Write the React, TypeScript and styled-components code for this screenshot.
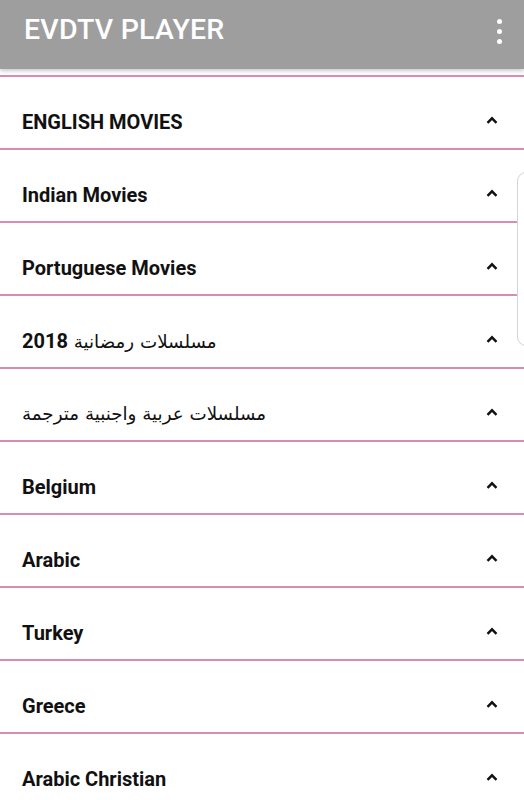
import React from "react";
import styled, { createGlobalStyle } from "styled-components";

const Global = createGlobalStyle`
  html, body { margin: 0; padding: 0; background: #fff; }
  body { font-family: Roboto, "DejaVu Sans", sans-serif; width: 524px; height: 800px; overflow: hidden; }
`;

const Page = styled.div`
  position: relative;
  width: 524px;
  height: 800px;
  overflow: hidden;
  background: #fff;
`;

const AppBar = styled.header`
  height: 69px;
  box-sizing: border-box;
  background: #9e9e9e;
  display: flex;
  align-items: center;
  justify-content: space-between;
  padding: 0 22px 8px 24px;
  box-shadow: 0 2px 4px rgba(0, 0, 0, 0.22);
  position: relative;
  z-index: 1;
`;

const Title = styled.h1`
  margin: 0;
  color: #fff;
  font-family: Roboto, sans-serif;
  font-weight: 500;
  font-size: 28.5px;
  letter-spacing: 0.2px;
  line-height: 1;
`;

const Dots = styled.div`
  display: flex;
  flex-direction: column;
  gap: 5px;
  padding-top: 2px;
`;

const Dot = styled.span`
  width: 5px;
  height: 5px;
  border-radius: 50%;
  background: #fff;
`;

const List = styled.ul`
  list-style: none;
  margin: 6px 0 0;
  padding: 0;
`;

const Row = styled.li`
  border-top: 2px solid #d98cb0;
  padding: 34px 26px 0 22px;
  box-sizing: content-box;
  display: flex;
  align-items: flex-start;
  justify-content: space-between;
  height: 37px;
`;

const Label = styled.span`
  font-family: Roboto, "DejaVu Sans", sans-serif;
  font-weight: 700;
  font-size: 20px;
  line-height: 22px;
  color: #111;
`;

const ArabicLabel = styled(Label)`
  font-family: "DejaVu Sans", sans-serif;
  font-weight: 400;
  font-size: 18.3px;
`;

const Num = styled.b`
  font-family: Roboto, sans-serif;
  font-weight: 700;
  font-size: 20px;
`;

const Chevron = styled.svg`
  width: 12px;
  height: 8px;
  margin-top: 5px;
`;

const SideTab = styled.div`
  position: absolute;
  left: 517px;
  top: 172px;
  width: 20px;
  height: 172px;
  border: 1px solid #d4d4d4;
  border-radius: 9px;
  background: #fff;
`;

const Up = () => (
  <Chevron viewBox="0 0 12 8">
    <polyline points="1.5,6.8 6,2.3 10.5,6.8" fill="none" stroke="#111" strokeWidth="2.4" />
  </Chevron>
);

const items: { text: string; arabic?: boolean; num?: string }[] = [
  { text: "ENGLISH MOVIES" },
  { text: "Indian Movies" },
  { text: "Portuguese Movies" },
  { text: "مسلسلات رمضانية ", arabic: true, num: "2018" },
  { text: "مسلسلات عربية واجنبية مترجمة", arabic: true },
  { text: "Belgium" },
  { text: "Arabic" },
  { text: "Turkey" },
  { text: "Greece" },
  { text: "Arabic Christian" },
];

export default function App() {
  return (
    <Page>
      <Global />
      <AppBar>
        <Title>EVDTV PLAYER</Title>
        <Dots>
          <Dot />
          <Dot />
          <Dot />
        </Dots>
      </AppBar>
      <List>
        {items.map((it) => (
          <Row key={it.text}>
            {it.arabic ? (
              <ArabicLabel dir="rtl">
                {it.text}
                {it.num && <Num>{it.num}</Num>}
              </ArabicLabel>
            ) : (
              <Label>{it.text}</Label>
            )}
            <Up />
          </Row>
        ))}
      </List>
      <SideTab />
    </Page>
  );
}
